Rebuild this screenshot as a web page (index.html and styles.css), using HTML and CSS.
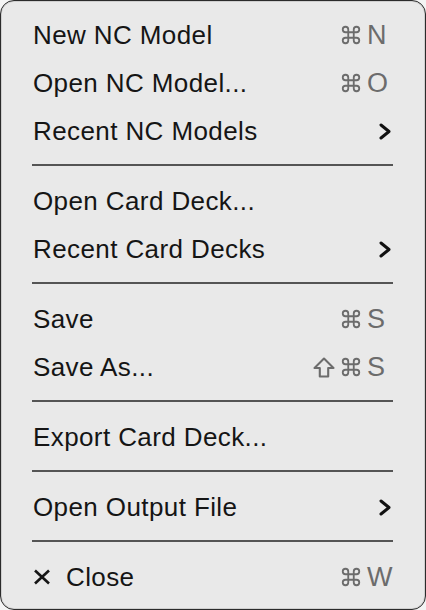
FILE: index.html
```html
<!DOCTYPE html>
<html>
<head>
<meta charset="utf-8">
<link rel="stylesheet" href="styles.css">
</head>
<body>
<div class="menu">
  <div class="item"><span class="label">New NC Model</span><span class="shortcut"><svg class="cmd" width="22" height="22" viewBox="0 0 24 24"><path d="M15 6v12a3 3 0 1 0 3-3H6a3 3 0 1 0 3 3V6a3 3 0 1 0-3 3h12a3 3 0 1 0-3-3"/></svg><span class="key">N</span></span></div>
  <div class="item"><span class="label">Open NC Model...</span><span class="shortcut"><svg class="cmd" width="22" height="22" viewBox="0 0 24 24"><path d="M15 6v12a3 3 0 1 0 3-3H6a3 3 0 1 0 3 3V6a3 3 0 1 0-3 3h12a3 3 0 1 0-3-3"/></svg><span class="key">O</span></span></div>
  <div class="item"><span class="label">Recent NC Models</span><svg class="chev" width="12" height="17" viewBox="0 0 12 17"><polyline points="2,2 10,8.5 2,15"/></svg></div>
  <div class="sep"></div>
  <div class="item"><span class="label">Open Card Deck...</span></div>
  <div class="item"><span class="label">Recent Card Decks</span><svg class="chev" width="12" height="17" viewBox="0 0 12 17"><polyline points="2,2 10,8.5 2,15"/></svg></div>
  <div class="sep"></div>
  <div class="item"><span class="label">Save</span><span class="shortcut"><svg class="cmd" width="22" height="22" viewBox="0 0 24 24"><path d="M15 6v12a3 3 0 1 0 3-3H6a3 3 0 1 0 3 3V6a3 3 0 1 0-3 3h12a3 3 0 1 0-3-3"/></svg><span class="key">S</span></span></div>
  <div class="item"><span class="label">Save As...</span><span class="shortcut"><svg class="shift" width="22" height="21" viewBox="0 0 22 21"><polygon points="11,1.5 1.5,11 6.8,11 6.8,19.5 15.2,19.5 15.2,11 20.5,11"/></svg><svg class="cmd" width="22" height="22" viewBox="0 0 24 24"><path d="M15 6v12a3 3 0 1 0 3-3H6a3 3 0 1 0 3 3V6a3 3 0 1 0-3 3h12a3 3 0 1 0-3-3"/></svg><span class="key">S</span></span></div>
  <div class="sep"></div>
  <div class="item"><span class="label">Export Card Deck...</span></div>
  <div class="sep"></div>
  <div class="item"><span class="label">Open Output File</span><svg class="chev" width="12" height="17" viewBox="0 0 12 17"><polyline points="2,2 10,8.5 2,15"/></svg></div>
  <div class="sep"></div>
  <div class="item"><span class="label"><svg class="x" width="18" height="16" viewBox="0 0 18 16"><line x1="2" y1="1.5" x2="16" y2="14.5"/><line x1="16" y1="1.5" x2="2" y2="14.5"/></svg>Close</span><span class="shortcut"><svg class="cmd" width="22" height="22" viewBox="0 0 24 24"><path d="M15 6v12a3 3 0 1 0 3-3H6a3 3 0 1 0 3 3V6a3 3 0 1 0-3 3h12a3 3 0 1 0-3-3"/></svg><span class="key">W</span></span></div>
</div>
</body>
</html>
```

FILE: styles.css
```css
html, body {
  margin: 0;
  padding: 0;
  background: #f4f4f4;
}
.menu {
  box-sizing: border-box;
  width: 426px;
  height: 610px;
  border: 1px solid #2b2b2b;
  border-radius: 14px;
  background: #e9e9e9;
  padding: 10px 0 8px;
  font-family: "Liberation Sans", Arial, sans-serif;
  font-size: 26px;
  letter-spacing: 0.4px;
  color: #151515;
  box-shadow: inset 0 0 0 1px #cfcfcf;
}
.item {
  height: 48px;
  display: flex;
  align-items: center;
  justify-content: space-between;
  padding: 0 29px 0 32px;
}
.label {
  display: flex;
  align-items: center;
  white-space: nowrap;
}
.x {
  margin-right: 15px;
  stroke: #151515;
  stroke-width: 2.6;
}
.shortcut {
  display: flex;
  align-items: center;
  color: #6c6c6c;
}
.cmd {
  fill: none;
  stroke: #6c6c6c;
  stroke-width: 2;
  stroke-linecap: round;
  stroke-linejoin: round;
}
.shift {
  margin-right: 5px;
  fill: none;
  stroke: #6c6c6c;
  stroke-width: 2.1;
  stroke-linejoin: round;
}
.key {
  width: 29px;
  margin-left: 5px;
  text-align: left;
  font-size: 27px;
}
.chev {
  margin-right: 5px;
  fill: none;
  stroke: #111;
  stroke-width: 3;
  stroke-linecap: round;
  stroke-linejoin: round;
}
.sep {
  height: 2px;
  background: #555;
  margin: 9px 32px 11px 31px;
}
```
